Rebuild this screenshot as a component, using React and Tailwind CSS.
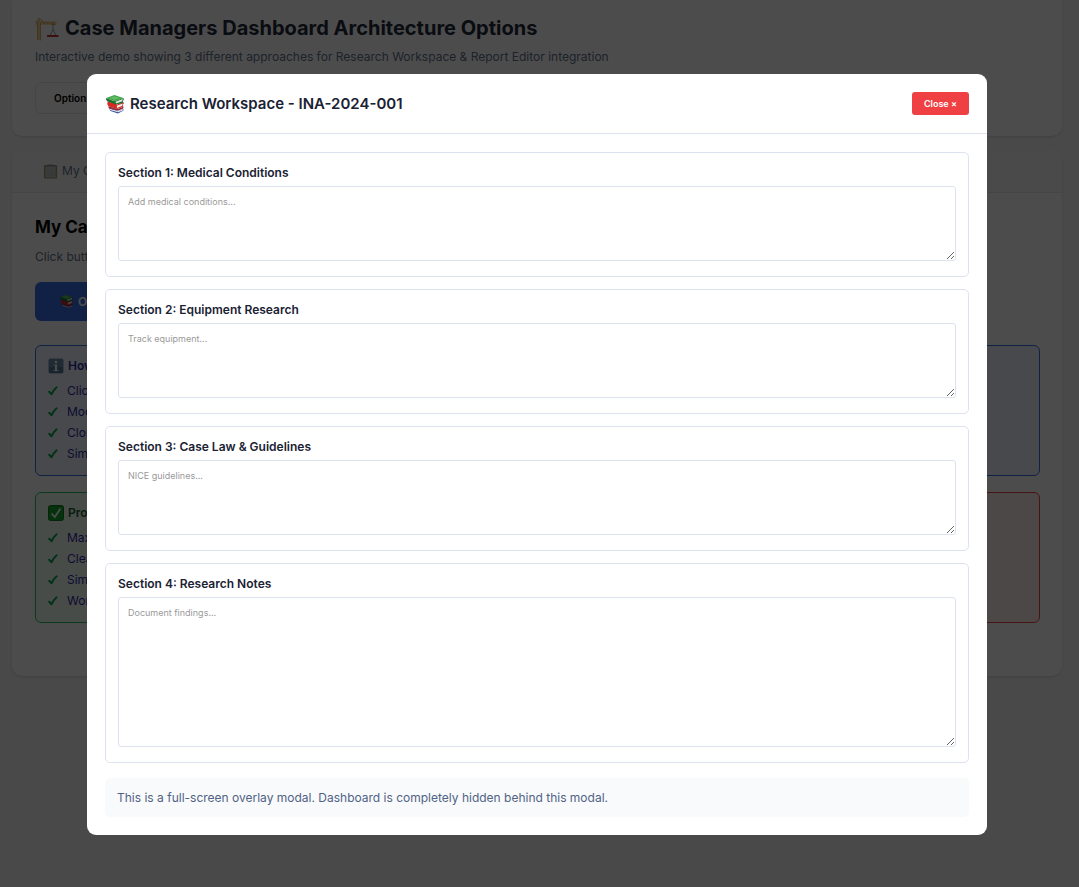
import React from "react";

function BooksIcon({ className }) {
  return (
    <svg viewBox="0 0 36 36" className={className} aria-hidden="true">
      <path d="M8 25 L24 31 L33 27 L33 30 L23 35 L9 30 Z" fill="#34509f" />
      <path d="M9 26 L23 31 L32 28 L32 30 L23 33 L9 29 Z" fill="#dfe4ee" />
      <path d="M6 22 L23 27 L33 23 L33 26 L23 30 L7 26 Z" fill="#8e2a3a" />
      <path d="M5 13 L22 19 L33 15 L34 17 L32 20 L33 23 L22 27 L6 22 Q3 17 5 13Z" fill="#d62a22" />
      <path d="M21 21 L32 17 L31 21 L22 25 Z" fill="#f1eeee" />
      <path d="M2 7 L17 13 L33 7 L34 10 L32 13 L33 16 L19 19 L4 13 Q1 10 2 7Z" fill="#1d6f30" />
      <path d="M19 14 L32 9 L31 13 L20 17 Z" fill="#dfe9dc" />
      <path d="M2 7 L17 2 L33 7 L18 13 Z" fill="#3fa54b" />
      <path d="M8 7 L17 4 L27 7 L18 10.500 Z" fill="#5fbd63" />
    </svg>
  );
}

function CraneIcon({ className }) {
  return (
    <svg viewBox="0 0 24 24" className={className} aria-hidden="true" fill="none">
      <path d="M2.500 5V23.500M5.500 5V23.500M2.500 8l3 3-3 3 3 3-3 3 3 3M5.500 8l-3 3 3 3-3 3 3 3-3 3" stroke="#d9a43a" strokeWidth="0.8" />
      <path d="M0.500 5h21M0.500 7h21M4 1v4M1 5l3-3.500L9 5M7 5l2 2 2-2 2 2 2-2 2 2 2-2" stroke="#d9a43a" strokeWidth="0.8" />
      <path d="M18 7v7M18 13l-3 5M18 13l3 5" stroke="#7788a8" strokeWidth="0.8" />
      <path d="M16.500 6.500h4v1.500h-4z" fill="#d9a43a" />
      <path d="M12 18h11.500v2H12z" fill="#c23a32" />
    </svg>
  );
}

function ClipboardIcon({ className }) {
  return (
    <svg viewBox="0 0 16 16" className={className} aria-hidden="true">
      <rect x="1" y="1" width="14" height="14.500" rx="1" fill="#a98f68" />
      <rect x="2.500" y="2.500" width="11" height="12" fill="#c3c7c8" />
      <path d="M4 6h8M4 8h8M4 10h8M4 12h8" stroke="#acb0b2" strokeWidth="0.6" />
      <path d="M5 0.500h6l1 2H4z" fill="#8d9499" />
    </svg>
  );
}

function InfoIcon({ className }) {
  return (
    <svg viewBox="0 0 16 16" className={className} aria-hidden="true">
      <rect x="0.500" y="0.500" width="15" height="15" rx="2" fill="#6d8ea8" />
      <path d="M1 9h14v4a2 2 0 0 1-2 2H3a2 2 0 0 1-2-2z" fill="#587a96" />
      <circle cx="8" cy="4" r="1.300" fill="#fff" />
      <path d="M6 6.500h3V12h1.300v1H5.700v-1H7V7.500H6z" fill="#fff" />
    </svg>
  );
}

function CheckBadgeIcon({ className }) {
  return (
    <svg viewBox="0 0 16 16" className={className} aria-hidden="true">
      <rect x="0.500" y="0.500" width="15" height="15" rx="2" fill="#12a32c" stroke="#0b7c22" />
      <path d="M3.500 8.500L6.800 12 12.500 3.500" stroke="#fff" strokeWidth="1.800" fill="none" />
    </svg>
  );
}

function CrossIcon({ className }) {
  return (
    <svg viewBox="0 0 16 16" className={className} aria-hidden="true">
      <path d="M3 3l10 10M13 3L3 13" stroke="#dc2626" strokeWidth="3" />
    </svg>
  );
}

function TickIcon() {
  return (
    <svg viewBox="0 0 10 10" className="h-[10px] w-[10px] shrink-0" aria-hidden="true">
      <path d="M1.200 5.800 L3.500 8.300 Q5.500 4 8.600 1.300" fill="none" stroke="#10a955" strokeWidth="2" strokeLinecap="round" strokeLinejoin="round" />
    </svg>
  );
}

function InfoBox({ icon, title, items, tone }) {
  return (
    <section className={`rounded-md border px-3 pt-3 pb-[11px] ${tone}`}>
      <h3 className="flex h-[16px] items-center gap-1 text-[12px] font-semibold">
        {icon}
        {title}
      </h3>
      <ul className="mt-[6px] text-[12px] leading-[21px] text-[#2c2ca8]">
        {items.map((item) => (
          <li key={item} className="flex items-center gap-[9px]">
            <TickIcon />
            {item}
          </li>
        ))}
      </ul>
    </section>
  );
}

function Dashboard() {
  return (
    <div className="px-3">
      <header className="rounded-b-[10px] bg-white px-[23px] pt-[15px] pb-[22px] shadow-sm">
        <h1 className="flex items-center gap-[6px] text-[20px] leading-[27px] font-bold text-[#1e293b]">
          <CraneIcon className="h-6 w-6" />
          Case Managers Dashboard Architecture Options
        </h1>
        <p className="mt-[6px] text-[12px] leading-[18px] text-[#64748b]">
          Interactive demo showing 3 different approaches for Research Workspace &amp; Report Editor integration
        </p>
        <div className="mt-4 flex gap-2">
          <button type="button" className="h-8 rounded-md border border-[#e2e8f0] px-[18px] text-[10px] font-semibold">
            Option 1: Modal
          </button>
        </div>
      </header>

      <main className="mt-[14px] overflow-hidden rounded-[10px] bg-white pb-[53px] shadow-sm">
        <nav className="flex h-[43px] items-center border-b border-[#e2e8f0] bg-[#f8f9fa] px-[31px]">
          <a href="#cases" className="flex items-center gap-1 text-[12px] text-[#64748b]">
            <ClipboardIcon className="h-[15px] w-[15px]" />
            My Cases
          </a>
        </nav>
        <div className="pt-[23px] pr-[22px] pl-[23px]">
          <h2 className="text-[17px] leading-[22px] font-bold">My Cases</h2>
          <p className="mt-[9px] text-[12px] leading-[19px] text-[#64748b]">Click button to open the workspace</p>
          <button type="button" className="mt-4 flex h-[39px] items-center gap-1 rounded-md bg-[#3b6fe8] px-6 text-[12px] font-semibold text-white">
            <BooksIcon className="h-[15px] w-[15px]" />
            Open Workspace
          </button>
          <div className="mt-6 grid grid-cols-2 gap-4">
            <div className="col-span-2">
              <InfoBox
                tone="border-[#3b6fe8] bg-[#eff6ff] text-[#2c2ca8]"
                icon={<InfoIcon className="h-[16px] w-[16px]" />}
                title="How it works:"
                items={["Click button to open", "Modal covers the page", "Close to return", "Simple focus"]}
              />
            </div>
            <InfoBox
              tone="border-[#22c55e] bg-[#f0fdf4] text-[#166534]"
              icon={<CheckBadgeIcon className="h-[16px] w-[16px]" />}
              title="Pros:"
              items={["Maximum space", "Clean separation", "Simple to build", "Works everywhere"]}
            />
            <InfoBox
              tone="border-[#ef4444] bg-[#fef2f2] text-[#991b1b]"
              icon={<CrossIcon className="h-[16px] w-[16px]" />}
              title="Cons:"
              items={["Hides dashboard", "Loses context", "Extra clicks"]}
            />
          </div>
        </div>
      </main>
    </div>
  );
}

const sections = [
  { id: "conditions", title: "Section 1: Medical Conditions", hint: "Add medical conditions...", size: "h-[75px]" },
  { id: "equipment", title: "Section 2: Equipment Research", hint: "Track equipment...", size: "h-[75px]" },
  { id: "guidelines", title: "Section 3: Case Law & Guidelines", hint: "NICE guidelines...", size: "h-[75px]" },
  { id: "notes", title: "Section 4: Research Notes", hint: "Document findings...", size: "h-[150px]" },
];

function ResearchModal() {
  return (
    <div role="dialog" aria-modal="true" aria-labelledby="modal-title" className="w-full max-w-[900px] rounded-[9px] bg-white">
      <div className="flex items-center justify-between border-b border-[#dde3ee] p-[18px]">
        <h2 id="modal-title" className="flex items-center gap-[5px] text-[15px] leading-[23px] font-semibold text-[#1a2233]">
          <BooksIcon className="h-5 w-5" />
          Research Workspace - INA-2024-001
        </h2>
        <button type="button" className="h-[23px] rounded-[3px] bg-[#ef4044] px-3 text-[9px] font-semibold text-white">
          Close ×
        </button>
      </div>
      <div className="p-[18px]">
        <div className="flex flex-col gap-3">
          {sections.map((s) => (
            <div key={s.id} className="rounded-[5px] border border-[#dde3ee] px-3 pt-3 pb-[15px]">
              <label htmlFor={s.id} className="block pb-[5px] text-[12px] leading-[16px] font-semibold text-[#1a2233]">
                {s.title}
              </label>
              <textarea
                id={s.id}
                placeholder={s.hint}
                className={`block w-full resize-y rounded-[3px] border border-[#dde3ee] p-[9px] text-[9px] leading-[12px] placeholder:text-[#9a9a9a] ${s.size}`}
              />
            </div>
          ))}
        </div>
        <p className="mt-[15px] rounded-[5px] bg-[#f8fafc] px-3 py-[10px] text-[12px] leading-[19px] text-[#516284]">
          This is a full-screen overlay modal. Dashboard is completely hidden behind this modal.
        </p>
      </div>
    </div>
  );
}

export default function App() {
  return (
    <div className="min-h-screen bg-[#f5f5f5] pr-[5px] font-['Inter',sans-serif]">
      <Dashboard />
      <div className="fixed inset-0 flex items-start justify-center overflow-auto bg-black/70 pt-[74px] pr-[5px]">
        <ResearchModal />
      </div>
    </div>
  );
}
